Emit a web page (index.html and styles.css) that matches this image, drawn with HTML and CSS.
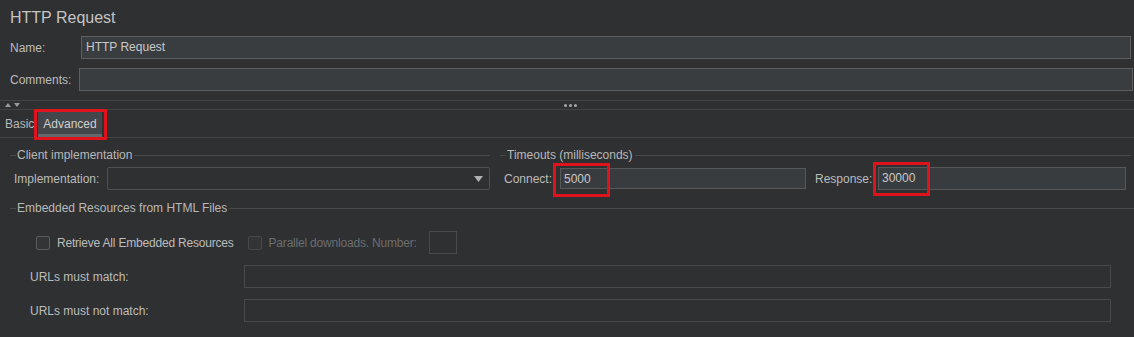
FILE: index.html
```html
<!DOCTYPE html>
<html lang="en">
<head>
    <meta charset="UTF-8">
    <title>HTTP Request</title>
    <link rel="stylesheet" href="styles.css">
</head>
<body>
    <div class="window">
        <div class="title">HTTP Request</div>

        <div class="row name-row">
            <label class="lbl name-lbl">Name:</label>
            <div class="field">HTTP Request</div>
        </div>
        <div class="row comments-row">
            <label class="lbl comments-lbl">Comments:</label>
            <div class="field"></div>
        </div>

        <div class="splitter">
            <div class="arrows">
                <svg width="20" height="6" viewBox="0 0 20 6">
                    <polygon points="2,5 5,1 8,5" fill="#9a9a9a"/>
                    <polygon points="11,1 17,1 14,5" fill="#9a9a9a"/>
                </svg>
            </div>
            <div class="grip">
                <span></span><span></span><span></span>
            </div>
        </div>

        <div class="tabs">
            <div class="tab">Basic</div>
            <div class="tab active">Advanced<span class="mark"></span></div>
        </div>

        <div class="panel">
            <div class="top-groups">
                <div class="group client">
                    <div class="legend">Client implementation</div>
                    <div class="group-row">
                        <label class="lbl impl-lbl">Implementation:</label>
                        <div class="select">
                            <svg width="9" height="6" viewBox="0 0 9 6"><polygon points="0,0 9,0 4.5,6" fill="#b0b0b0"/></svg>
                        </div>
                    </div>
                </div>
                <div class="group timeouts">
                    <div class="legend">Timeouts (milliseconds)</div>
                    <div class="group-row">
                        <label class="lbl connect-lbl">Connect:</label>
                        <div class="field num connect">5000<span class="mark"></span></div>
                        <label class="lbl response-lbl">Response:</label>
                        <div class="field num response">30000<span class="mark"></span></div>
                    </div>
                </div>
            </div>

            <div class="group embedded">
                <div class="legend">Embedded Resources from HTML Files</div>
                <div class="check-row">
                    <span class="box"></span>
                    <span class="check-lbl">Retrieve All Embedded Resources</span>
                    <span class="box disabled"></span>
                    <span class="check-lbl disabled">Parallel downloads. Number:</span>
                    <span class="small-field"></span>
                </div>
                <div class="url-row">
                    <label class="lbl url-lbl">URLs must match:</label>
                    <div class="url-field"></div>
                </div>
                <div class="url-row">
                    <label class="lbl url-lbl">URLs must not match:</label>
                    <div class="url-field"></div>
                </div>
            </div>
        </div>
    </div>
</body>
</html>
```

FILE: styles.css
```css
body {
    margin: 0;
    background-color: #2f3032;
    font-family: "Liberation Sans", Arial, sans-serif;
    font-size: 12px;
    color: #bcbcbc;
}
.window {
    width: 1134px;
    height: 337px;
    overflow: hidden;
}
.title {
    padding: 5px 0 0 10px;
    height: 25px;
    line-height: 25px;
    font-size: 16px;
    color: #c4c4c4;
}
.row {
    display: flex;
    align-items: center;
    height: 23px;
}
.name-row {
    margin-top: 6px;
    padding-right: 3px;
}
.comments-row {
    margin-top: 9px;
    padding-right: 1px;
}
.lbl {
    flex-shrink: 0;
    white-space: nowrap;
}
.name-lbl {
    width: 71px;
    padding-left: 10px;
}
.comments-lbl {
    width: 69px;
    padding-left: 10px;
}
.field {
    flex: 1;
    height: 21px;
    line-height: 21px;
    border: 1px solid #5c5e60;
    background-color: #3a3d3f;
    padding-left: 4px;
    color: #c8c8c8;
}
.splitter {
    margin-top: 9px;
    height: 8px;
    border-top: 1px solid #414345;
    border-bottom: 1px solid #414345;
    display: flex;
    align-items: center;
}
.arrows {
    padding-left: 3px;
    height: 6px;
}
.arrows svg {
    display: block;
}
.grip {
    display: flex;
    gap: 2px;
    margin-left: 541px;
}
.grip span {
    width: 3px;
    height: 3px;
    border-radius: 50%;
    background-color: #a8a8a8;
}
.tabs {
    display: flex;
    align-items: flex-end;
    height: 27px;
    border-bottom: 1px solid #444648;
    padding-left: 5px;
}
.tab {
    height: 25px;
    line-height: 24px;
    color: #b8b8b8;
    position: relative;
}
.tab.active {
    margin-left: 4px;
    padding: 0 5px;
    background-color: #43464a;
    color: #d0d0d0;
    box-shadow: inset 0 -3px 0 #65686b;
}
.tab.active .mark {
    position: absolute;
    left: -4px;
    top: -3px;
    width: 67px;
    height: 25px;
    border: 3px solid #e0121b;
    border-radius: 1px;
}
.top-groups {
    display: flex;
    padding-top: 10px;
}
.group.client {
    width: 480px;
    padding-left: 10px;
}
.group.timeouts {
    flex: 1;
}
.legend {
    display: flex;
    align-items: center;
    height: 14px;
    white-space: nowrap;
    color: #b8b8b8;
}
.timeouts .legend {
    margin-left: 10px;
    margin-right: 3px;
}
.legend::before {
    content: "";
    width: 6px;
    border-top: 1px solid #48494b;
    margin-right: 1px;
}
.legend::after {
    content: "";
    flex: 1;
    border-top: 1px solid #48494b;
    margin-left: 2px;
}
.group-row {
    display: flex;
    align-items: center;
    height: 23px;
    margin-top: 5px;
}
.timeouts .group-row {
    padding-left: 14px;
    padding-right: 8px;
}
.impl-lbl {
    width: 93px;
    padding-left: 4px;
}
.select {
    flex: 1;
    height: 21px;
    border: 1px solid #4e5052;
    border-radius: 2px;
    display: flex;
    align-items: center;
    justify-content: flex-end;
    padding-right: 6px;
}
.connect-lbl {
    width: 56px;
}
.response-lbl {
    width: 63px;
    padding-left: 9px;
}
.field.num {
    position: relative;
    background-color: #393c3e;
    border-color: #56585a;
    padding-left: 3px;
}
.field.connect {
    flex: none;
    width: 246px;
    box-sizing: border-box;
}
.field.num .mark {
    position: absolute;
    top: -6px;
    left: -8px;
    width: 51px;
    height: 28px;
    border: 3px solid #e0121b;
}
.field.response .mark {
    left: -6px;
}
.group.embedded {
    margin-top: 11px;
    padding-left: 10px;
}
.check-row {
    display: flex;
    align-items: center;
    height: 23px;
    margin-top: 16px;
    padding-left: 26px;
}
.box {
    width: 12px;
    height: 12px;
    border: 1px solid #5a5c5e;
    border-radius: 2px;
    background-color: #323436;
    margin-right: 7px;
}
.box.disabled {
    border-color: #454749;
    margin-left: 14px;
    margin-right: 7px;
}
.check-lbl {
    color: #bcbcbc;
    letter-spacing: -0.2px;
}
.check-lbl.disabled {
    color: #6c6d6f;
}
.small-field {
    width: 26px;
    height: 21px;
    border: 1px solid #48494b;
    margin-left: 12px;
}
.url-row {
    display: flex;
    align-items: center;
    height: 23px;
    margin-top: 11px;
    padding-left: 20px;
}
.url-lbl {
    width: 214px;
}
.url-field {
    width: 865px;
    height: 21px;
    border: 1px solid #47494b;
}
```
